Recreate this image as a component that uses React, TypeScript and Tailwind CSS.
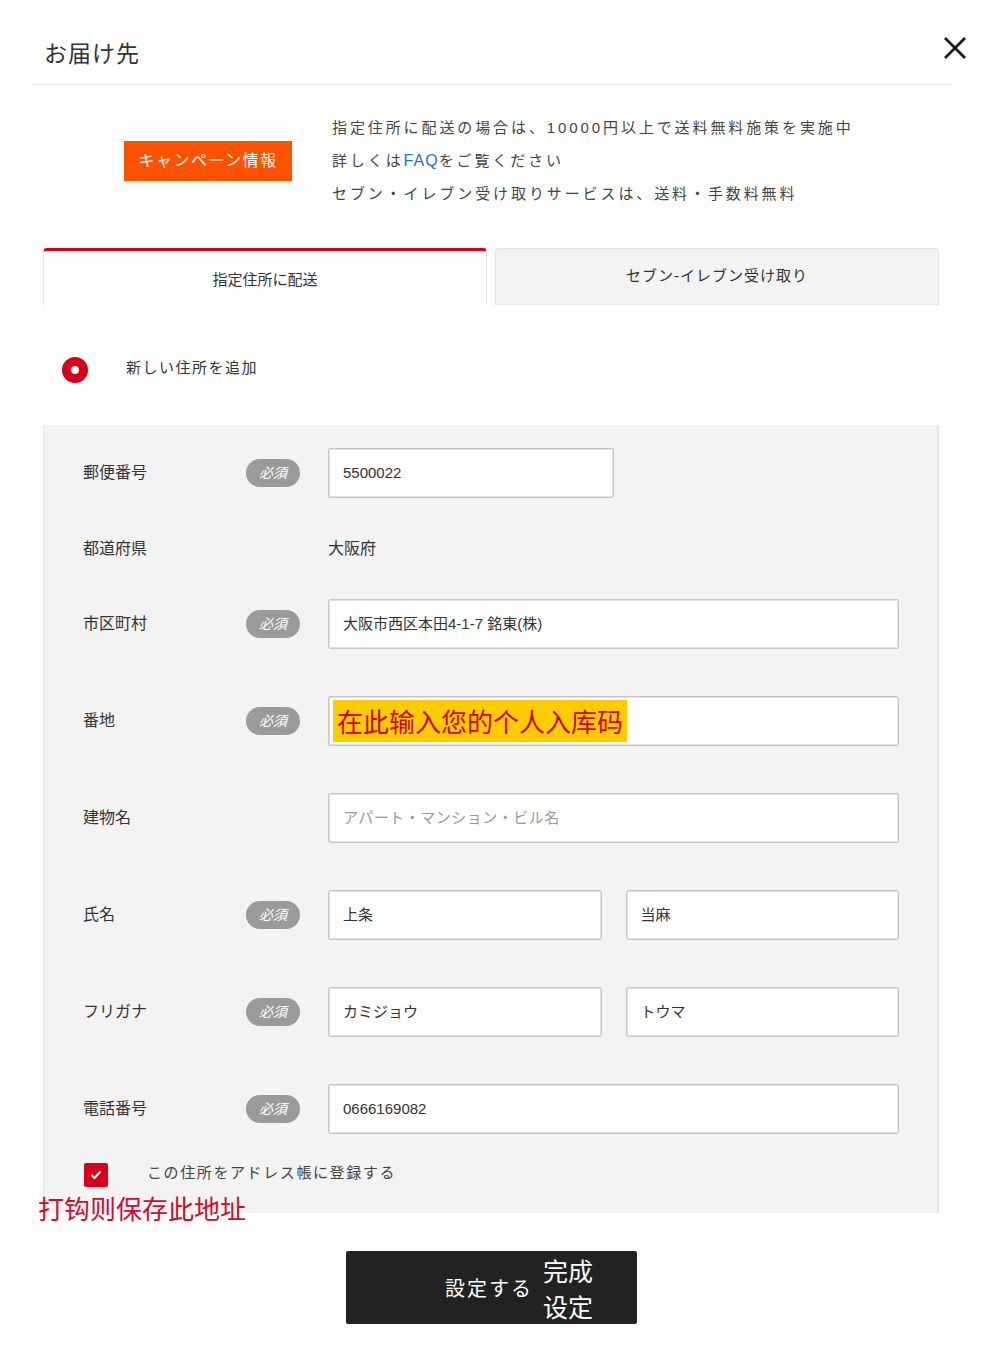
const font = "font-['Liberation_Sans','Noto_Sans_CJK_JP',sans-serif]";

function Badge() {
  return (
    <span className="w-[54px] h-[28px] rounded-full bg-[#9a9a9a] text-white text-[14px] italic flex items-center justify-center">
      必須
    </span>
  );
}

function Field({ value, placeholder }: { value?: string; placeholder?: string }) {
  return (
    <div className="flex-1 h-[50px] bg-white border border-[#c6c6c6] rounded-[2px] shadow-[inset_0_0_0_1px_#e2e2e2] flex items-center px-[14px] text-[15px] text-[#333]">
      {value ? value : <span className="text-[#999] tracking-[0.5px]">{placeholder}</span>}
    </div>
  );
}

function Row({
  label,
  required,
  children,
  className,
}: {
  label: string;
  required?: boolean;
  children: React.ReactNode;
  className?: string;
}) {
  return (
    <div className={`flex items-center h-[50px] ${className ?? ''}`}>
      <div className="w-[163px] text-[16px] text-[#333]">{label}</div>
      <div className="w-[82px]">{required && <Badge />}</div>
      <div className="flex-1 flex gap-[24px] items-center">{children}</div>
    </div>
  );
}

export default function App() {
  return (
    <div className={`w-[991px] min-h-[1350px] bg-white ${font} text-[#333]`}>
      {/* header */}
      <div className="h-[84px] flex items-end justify-between pl-[44px] pr-[24px] pb-[18px]">
        <h1 className="text-[23px] leading-none tracking-[1px] text-[#333]">お届け先</h1>
        <svg width="24" height="24" viewBox="0 0 24 24" className="mb-[6px]">
          <path d="M2 2 L22 22 M22 2 L2 22" stroke="#111" strokeWidth="2.6" />
        </svg>
      </div>
      <div className="ml-[31px] w-[921px] border-t border-[#e2e2e2]" />

      {/* campaign */}
      <div className="flex items-center pt-[26px] pl-[124px]">
        <div className="w-[168px] h-[40px] bg-[#ff5200] text-white text-[16px] tracking-[1.5px] flex items-center justify-center">
          キャンペーン情報
        </div>
        <div className="ml-[40px] text-[15px] leading-[33px] tracking-[2.9px] text-[#444]">
          <p>指定住所に配送の場合は、10000円以上で送料無料施策を実施中</p>
          <p>
            詳しくは<span className="text-[#2a6fc9] text-[16px] tracking-[1px]">FAQ</span>をご覧ください
          </p>
          <p>セブン・イレブン受け取りサービスは、送料・手数料無料</p>
        </div>
      </div>

      <div className="ml-[43px] w-[896px]">
        {/* tabs */}
        <div className="mt-[38px] flex gap-[8px] h-[57px]">
          <div className="w-[444px] border-t-[3px] border-[#d7001b] border-x border-x-[#e6e6e6] rounded-t-[4px] bg-white flex items-center justify-center text-[15px] pt-[4px]">
            指定住所に配送
          </div>
          <div className="w-[444px] bg-[#f3f3f3] border border-[#e3e3e3] border-b-[#e8e8e8] rounded-t-[4px] flex items-center justify-center text-[15px] tracking-[1px]">
            セブン-イレブン受け取り
          </div>
        </div>

        {/* radio */}
        <div className="h-[120px] flex items-center pl-[19px] pt-[10px]">
          <div className="w-[26px] h-[26px] rounded-full border-[9px] border-[#d7001b]" />
          <span className="ml-[38px] text-[15px] tracking-[1.5px] -mt-[3px]">新しい住所を追加</span>
        </div>

        {/* form panel */}
        <div className="relative bg-[#f3f3f3] border-l border-r-2 border-l-[#e8e8e8] border-r-[#e6e6e6] pl-[39px] pr-[38px] pt-[23px] pb-[26px]">
          <Row label="郵便番号" required>
            <div className="w-[286px] flex">
              <Field value="5500022" />
            </div>
          </Row>
          <Row label="都道府県" className="mt-[26px]">
            <span className="text-[16px]">大阪府</span>
          </Row>
          <Row label="市区町村" required className="mt-[25px]">
            <Field value="大阪市西区本田4-1-7 銘東(株)" />
          </Row>
          <Row label="番地" required className="mt-[47px]">
            <div className="flex-1 h-[50px] bg-white border border-[#c6c6c6] rounded-[2px] shadow-[inset_0_0_0_1px_#e2e2e2] flex items-center px-[4px]">
              <span className="h-[42px] bg-[#ffcc00] text-[#d0021b] text-[26px] leading-[42px] px-[4px] font-['Noto_Sans_CJK_SC',sans-serif]">
                在此输入您的个人入库码
              </span>
            </div>
          </Row>
          <Row label="建物名" className="mt-[47px]">
            <Field placeholder="アパート・マンション・ビル名" />
          </Row>
          <Row label="氏名" required className="mt-[47px]">
            <Field value="上条" />
            <Field value="当麻" />
          </Row>
          <Row label="フリガナ" required className="mt-[47px]">
            <Field value="カミジョウ" />
            <Field value="トウマ" />
          </Row>
          <Row label="電話番号" required className="mt-[47px]">
            <Field value="0666169082" />
          </Row>

          <div className="mt-[29px] flex items-center h-[24px]">
            <div className="w-[24px] h-[24px] ml-[1px] rounded-[2px] bg-[#d7001b] flex items-center justify-center">
              <svg width="12" height="10" viewBox="0 0 12 10">
                <path d="M1.5 5 L4.5 8 L10.5 1.5" fill="none" stroke="white" strokeWidth="2" />
              </svg>
            </div>
            <span className="ml-[39px] text-[15px] tracking-[1.6px] text-[#444] -mt-[3px]">
              この住所をアドレス帳に登録する
            </span>
          </div>

          <div className="absolute left-[-6px] bottom-[-8px] text-[26px] leading-none text-[#c8102e] font-['Noto_Sans_CJK_SC',sans-serif]">
            打钩则保存此地址
          </div>
        </div>

        {/* submit */}
        <div className="flex justify-center mt-[38px]">
          <button className="w-[291px] h-[73px] bg-[#222] rounded-[2px] text-white flex items-center justify-center pl-[56px]">
            <span className="text-[20px] tracking-[2px] mt-[2px]">設定する</span>
            <span className="ml-[10px] text-[25px] leading-[36px] text-left font-['Noto_Sans_CJK_SC',sans-serif]">
              完成
              <br />
              设定
            </span>
          </button>
        </div>
      </div>
    </div>
  );
}
